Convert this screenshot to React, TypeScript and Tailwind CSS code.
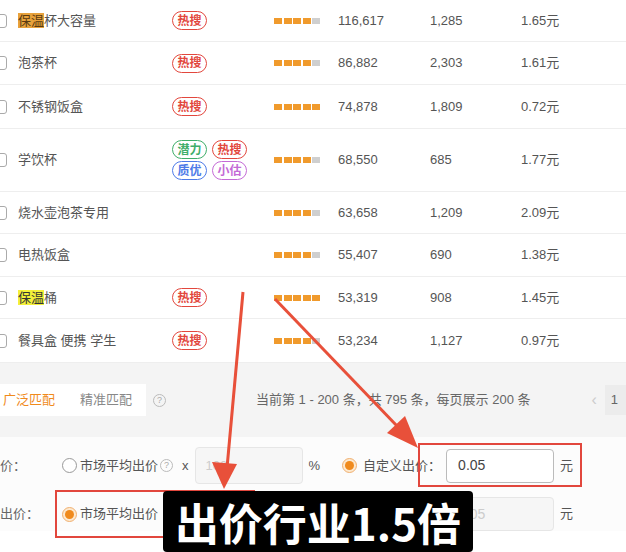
import React from "react";

type Tag = { t: string; c: string };
const RED = "#e2473d";
const hot: Tag = { t: "热搜", c: RED };

type Row = {
  kw: React.ReactNode;
  tags: Tag[];
  dots: number;
  a: string;
  b: string;
  p: string;
  h: string;
};

const rows: Row[] = [
  {
    kw: (
      <>
        <span className="bg-[#e8a23c] text-[#5a3a10]">保温</span>杯大容量
      </>
    ),
    tags: [hot],
    dots: 4,
    a: "116,617",
    b: "1,285",
    p: "1.65元",
    h: "h-[42px]",
  },
  { kw: "泡茶杯", tags: [hot], dots: 4, a: "86,882", b: "2,303", p: "1.61元", h: "h-[43px]" },
  { kw: "不锈钢饭盒", tags: [hot], dots: 5, a: "74,878", b: "1,809", p: "0.72元", h: "h-[44px]" },
  {
    kw: "学饮杯",
    tags: [
      { t: "潜力", c: "#3fae6a" },
      hot,
      { t: "质优", c: "#4d7ae8" },
      { t: "小估", c: "#c46ad6" },
    ],
    dots: 4,
    a: "68,550",
    b: "685",
    p: "1.77元",
    h: "h-[63px]",
  },
  { kw: "烧水壶泡茶专用", tags: [], dots: 4, a: "63,658", b: "1,209", p: "2.09元", h: "h-[42px]" },
  { kw: "电热饭盒", tags: [], dots: 4, a: "55,407", b: "690", p: "1.38元", h: "h-[43px]" },
  {
    kw: (
      <>
        <span className="bg-[#f4f03a] text-[#333]">保温</span>桶
      </>
    ),
    tags: [hot],
    dots: 5,
    a: "53,319",
    b: "908",
    p: "1.45元",
    h: "h-[42px]",
  },
  { kw: "餐具盒 便携 学生", tags: [hot], dots: 4, a: "53,234", b: "1,127", p: "0.97元", h: "h-[44px]" },
];

function Pill({ tag }: { tag: Tag }) {
  return (
    <span
      className="inline-flex h-[19px] w-[35px] items-center justify-center rounded-full border-[1.5px] text-[12px] font-bold leading-none"
      style={{ borderColor: tag.c, color: tag.c }}
    >
      {tag.t}
    </span>
  );
}

function Dots({ n }: { n: number }) {
  return (
    <div className="flex gap-[1.5px]">
      {[0, 1, 2, 3, 4].map((i) => (
        <span
          key={i}
          className={`h-[6px] w-[8px] ${i < n ? "bg-[#f09a2c]" : "bg-[#cfcfcf]"}`}
        />
      ))}
    </div>
  );
}

function Radio({ on }: { on: boolean }) {
  return on ? (
    <span className="flex h-[15px] w-[15px] items-center justify-center rounded-full border border-[#f0b070] bg-[#fde9cf]">
      <span className="h-[9px] w-[9px] rounded-full bg-[#f08a1c]" />
    </span>
  ) : (
    <span className="h-[15px] w-[15px] rounded-full border border-[#999] bg-white" />
  );
}

function Help() {
  return (
    <span className="flex h-[13px] w-[13px] items-center justify-center rounded-full border border-[#bbb] text-[9px] leading-none text-[#aaa]">
      ?
    </span>
  );
}

export default function App() {
  const cjk = { fontFamily: '"Liberation Sans", "Noto Sans CJK SC", sans-serif' };
  return (
    <div
      className="relative h-[552px] w-[626px] overflow-hidden bg-white text-[13px] text-[#555]"
      style={cjk}
    >
      {/* table */}
      <div className="flex flex-col">
        {rows.map((r, i) => (
          <div key={i} className={`flex items-center border-b border-[#eeeeee] ${r.h}`}>
            <div className="w-[18px]">
              <span className="-ml-[7px] block h-[14px] w-[14px] rounded-[3px] border border-[#aaa]" />
            </div>
            <div className="w-[154px] whitespace-nowrap">{r.kw}</div>
            <div className="grid w-[102px] grid-cols-[35px_35px] gap-x-[5px] gap-y-[2px]">
              {r.tags.map((t, j) => (
                <Pill key={j} tag={t} />
              ))}
            </div>
            <div className="w-[64px]">
              <Dots n={r.dots} />
            </div>
            <div className="w-[92px]">{r.a}</div>
            <div className="w-[91px]">{r.b}</div>
            <div>{r.p}</div>
          </div>
        ))}
      </div>

      {/* gray band */}
      <div className="flex h-[74px] items-center bg-[#f4f4f4]">
        <div className="flex h-[32px] items-center bg-white">
          <span className="w-[66px] pl-[3px] text-[#f08a1c]">广泛匹配</span>
          <span className="w-[80px] pl-[14px] text-[#888]">精准匹配</span>
        </div>
        <span className="ml-[7px]">
          <Help />
        </span>
        <span className="ml-[90px] whitespace-nowrap text-[#666]">
          当前第 1 - 200 条，共 795 条，每页展示 200 条
        </span>
        <span className="ml-[61px] text-[16px] text-[#ccc]">‹</span>
        <span className="ml-[8px] flex h-[30px] w-[30px] items-center bg-[#ececec] pl-[6px] text-[#666]">
          1
        </span>
      </div>

      {/* bid rows */}
      <div className="flex flex-col bg-[#fcfcfc] pt-[10px]">
        <div className="flex h-[37px] items-center">
          <span className="w-[62px] text-[#666]">价：</span>
          <Radio on={false} />
          <span className="ml-[3px]">市场平均出价</span>
          <span className="ml-[2px]">
            <Help />
          </span>
          <span className="ml-[9px]">x</span>
          <span className="ml-[6px] flex h-[37px] w-[108px] items-center rounded-[4px] border border-[#e6e6e6] bg-[#f6f6f6] pl-[10px] text-[#ccc]">
            100
          </span>
          <span className="ml-[6px]">%</span>
          <span className="ml-[22px]">
            <Radio on={true} />
          </span>
          <span className="ml-[6px] whitespace-nowrap">自定义出价：</span>
          <span className="ml-[5px] flex h-[34px] w-[108px] items-center rounded-[4px] border border-[#bbb] bg-white pl-[11px] text-[14px] text-[#444]">
            0.05
          </span>
          <span className="ml-[6px]">元</span>
        </div>
        <div className="mt-[13px] flex h-[34px] items-center">
          <span className="w-[62px] text-[#666]">出价：</span>
          <Radio on={true} />
          <span className="ml-[3px]">市场平均出价</span>
          <span className="ml-[288px] flex h-[34px] w-[108px] items-center rounded-[4px] border border-[#e6e6e6] bg-[#f6f6f6] pl-[11px] text-[14px] text-[#ccc]">
            0.05
          </span>
          <span className="ml-[6px]">元</span>
        </div>
      </div>

      {/* annotation: red boxes */}
      <div className="absolute left-[418px] top-[443px] h-[44px] w-[164px] border-2 border-[#e2473d]" />
      <div className="absolute left-[55px] top-[490px] h-[48px] w-[200px] border-2 border-[#e2473d]" />

      {/* annotation: arrows */}
      <svg className="absolute left-0 top-0" width="626" height="552" viewBox="0 0 626 552">
        <line x1="243" y1="292" x2="227" y2="468" stroke="#e8503a" strokeWidth="3" />
        <polygon points="224,489 212,462 237,464" fill="#e8503a" />
        <line x1="275" y1="299" x2="398" y2="427" stroke="#e8503a" strokeWidth="3" />
        <polygon points="418,448 387,433 405,416" fill="#e8503a" />
      </svg>

      {/* caption */}
      <div
        className="absolute left-[163px] top-[491px] flex h-[61px] w-[310px] items-center justify-center rounded-[4px] bg-black text-[44px] font-bold leading-none text-white"
        style={{ fontFamily: '"Noto Sans CJK SC", "Liberation Sans", sans-serif' }}
      >
        出价行业1.5倍
      </div>
    </div>
  );
}
